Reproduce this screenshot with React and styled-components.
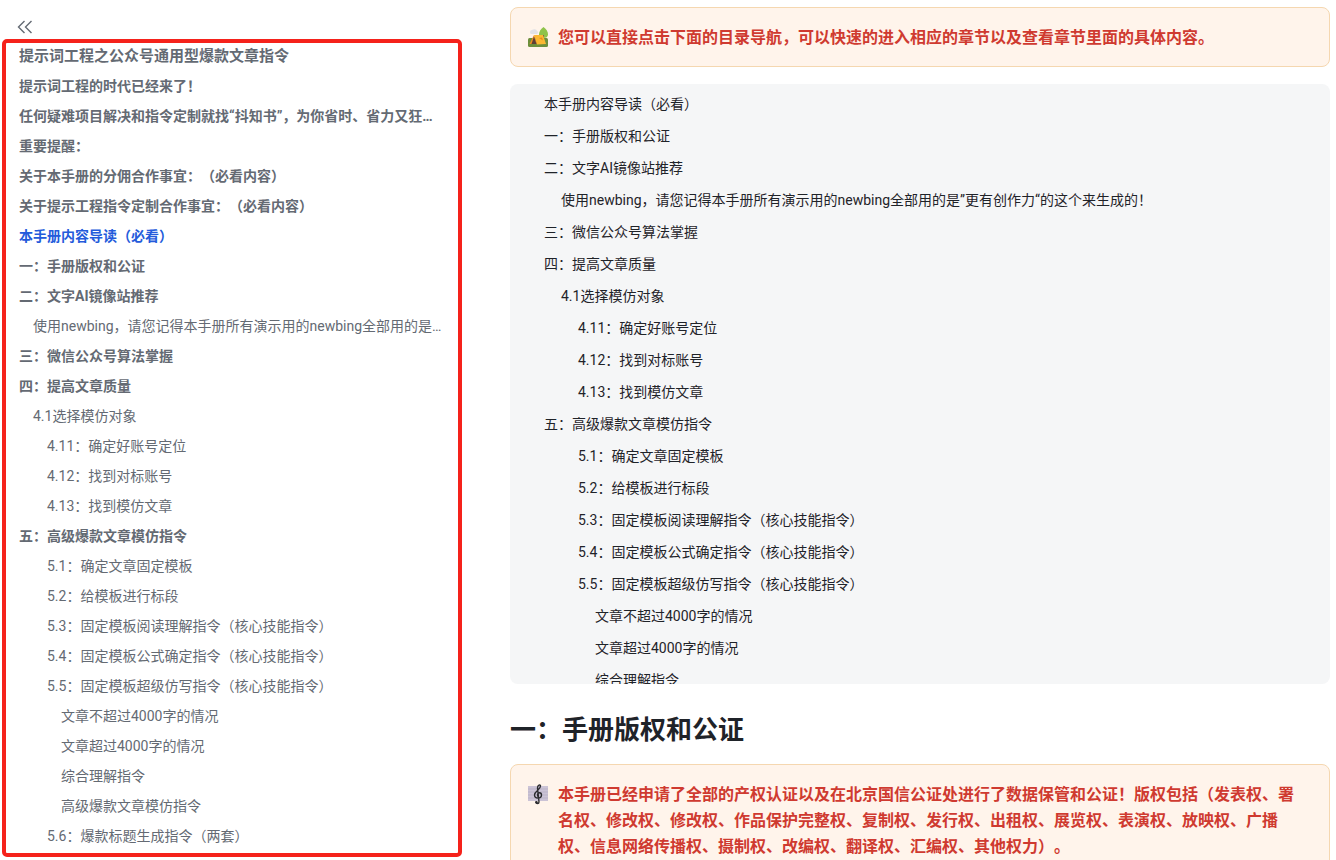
import React from 'react';
import styled, { createGlobalStyle } from 'styled-components';

const GlobalStyle = createGlobalStyle`
  * {
    box-sizing: border-box;
  }

  body {
    margin: 0;
    background-color: #ffffff;
    color: #1f2329;
    font-family: Roboto, 'Noto Sans CJK SC', sans-serif;
    font-size: 14px;
    text-spacing-trim: space-all;
  }
`;

const Page = styled.div`
  display: grid;
  grid-template-columns: 462px minmax(0, 1fr);
  column-gap: 48px;
  height: 100vh;
  padding-right: 6px;
  overflow: hidden;
`;

const Sidebar = styled.aside`
  padding: 15px 0 0 2px;
`;

const CollapseButton = styled.button`
  display: flex;
  align-items: center;
  height: 24px;
  padding: 0 15px;
  border: none;
  background: none;
  color: #646a73;
  cursor: pointer;
`;

const Outline = styled.nav`
  padding: 0 12px 0 13px;
  border: 4px solid #f5221b;
  border-radius: 5px;
`;

const OutlineLink = styled.a`
  display: block;
  height: 30px;
  line-height: 26px;
  padding-left: ${({ $level }) => $level * 14}px;
  overflow: hidden;
  text-overflow: ellipsis;
  white-space: nowrap;
  text-decoration: none;
  font-size: ${({ $title }) => ($title ? 15 : 14)}px;
  font-weight: ${({ $level }) => ($level === 0 ? 700 : 400)};
  color: ${({ $active }) => ($active ? '#245bdb' : '#646a73')};
`;

const Content = styled.main`
  padding-top: 7px;
`;

const Callout = styled.section`
  display: flex;
  gap: 9px;
  padding: 17px 20px 15px 16px;
  border: 1px solid #f5d7b0;
  border-radius: 8px;
  background-color: #fff4eb;
`;

const CalloutIcon = styled.svg`
  flex: none;
  width: 22px;
  height: 22px;
  margin-top: 1px;
`;

const CalloutText = styled.p`
  margin: 0;
  line-height: 26px;
  font-size: 16px;
  font-weight: 700;
  color: #cf3a30;
`;

const Directory = styled.nav`
  max-height: 600px;
  margin-top: 17px;
  padding: 4px 34px;
  overflow-y: auto;
  scrollbar-width: none;
  border-radius: 8px;
  background-color: #f5f6f7;
`;

const DirectoryLink = styled.a`
  display: block;
  padding-left: ${({ $level }) => $level * 17}px;
  line-height: 32px;
  color: #1f2329;
  text-decoration: none;
`;

const Heading = styled.h1`
  margin: 28px 0 16px;
  line-height: 36px;
  font-size: 26px;
  font-weight: 700;
`;

const chapters = [
  { text: '本手册内容导读（必看）', level: 0, active: true },
  { text: '一：手册版权和公证', level: 0 },
  { text: '二：文字AI镜像站推荐', level: 0 },
  { text: '使用newbing，请您记得本手册所有演示用的newbing全部用的是”更有创作力“的这个来生成的！', level: 1 },
  { text: '三：微信公众号算法掌握', level: 0 },
  { text: '四：提高文章质量', level: 0 },
  { text: '4.1选择模仿对象', level: 1 },
  { text: '4.11：确定好账号定位', level: 2 },
  { text: '4.12：找到对标账号', level: 2 },
  { text: '4.13：找到模仿文章', level: 2 },
  { text: '五：高级爆款文章模仿指令', level: 0 },
  { text: '5.1：确定文章固定模板', level: 2 },
  { text: '5.2：给模板进行标段', level: 2 },
  { text: '5.3：固定模板阅读理解指令（核心技能指令）', level: 2 },
  { text: '5.4：固定模板公式确定指令（核心技能指令）', level: 2 },
  { text: '5.5：固定模板超级仿写指令（核心技能指令）', level: 2 },
  { text: '文章不超过4000字的情况', level: 3 },
  { text: '文章超过4000字的情况', level: 3 },
  { text: '综合理解指令', level: 3 },
];

const outline = [
  { text: '提示词工程之公众号通用型爆款文章指令', level: 0, title: true },
  { text: '提示词工程的时代已经来了！', level: 0 },
  { text: '任何疑难项目解决和指令定制就找“抖知书”，为你省时、省力又狂赚钱！', level: 0 },
  { text: '重要提醒：', level: 0 },
  { text: '关于本手册的分佣合作事宜：（必看内容）', level: 0 },
  { text: '关于提示工程指令定制合作事宜：（必看内容）', level: 0 },
  ...chapters,
  { text: '高级爆款文章模仿指令', level: 3 },
  { text: '5.6：爆款标题生成指令（两套）', level: 2 },
];

const CampingIcon = () => (
  <CalloutIcon viewBox="0 0 22 22" aria-hidden="true">
    <rect x="1" y="12" width="20" height="9" rx="1.500" fill="#6d8f3c" />
    <path d="M3 6a2 2 0 0 1 2-2 3 2.500 0 0 1 5 1 1.500 1.500 0 0 1-1 3H4a2 2 0 0 1-1-2z" fill="#e2e2e5" />
    <path d="M16.500 1c-3 2-4.500 5-4.500 7.500 0 2.500 2 3.500 4.500 3.500s4.500-1 4.500-3.500c0-2.500-1.500-5.500-4.500-7.500z" fill="#8fc34a" />
    <path d="M16 9h1v5h-1z" fill="#795046" />
    <path d="M7 9h9l3 9-9 .5z" fill="#fbb832" />
    <path d="M7 9L2.500 18H10z" fill="#ef8d22" />
    <path d="M7 10.500L4.500 18h5z" fill="#5d4037" />
    <path d="M12 12l3-.5 1 3z" fill="#e58a20" />
  </CalloutIcon>
);

const ScoreIcon = () => (
  <CalloutIcon viewBox="0 0 22 22" aria-hidden="true">
    <rect x="1" y="3" width="20" height="15" fill="#cbc3d6" />
    <path d="M1 6h20M1 9h20M1 12h20M1 15h20" stroke="#b5adc2" strokeWidth="0.7" />
    <path
      d="M9 19c0 2 3 2 3 0L10.500 5c0-3 3-4 3-2 0 4-6 5-6 9 0 4 7 4 7 0 0-3-4-3-4 0 0 1 .5 1.500 1 1.500"
      fill="none"
      stroke="#2b2b2f"
      strokeWidth="1.400"
      strokeLinecap="round"
    />
    <circle cx="9.500" cy="19.300" r="1.200" fill="#2b2b2f" />
  </CalloutIcon>
);

const App = () => {
  return (
    <>
      <GlobalStyle />
      <Page lang="zh-CN">
        <Sidebar>
          <CollapseButton type="button" aria-label="收起目录">
            <svg width="16" height="14" viewBox="0 0 16 14" fill="none" stroke="currentColor" strokeWidth="1.4">
              <path d="M7.500 1L1.500 7l6 6M14.500 1l-6 6 6 6" />
            </svg>
          </CollapseButton>
          <Outline>
            {outline.map((item) => (
              <OutlineLink
                key={item.text}
                href="#"
                $level={item.level}
                $title={item.title}
                $active={item.active}
              >
                {item.text}
              </OutlineLink>
            ))}
          </Outline>
        </Sidebar>

        <Content>
          <Callout>
            <CampingIcon />
            <CalloutText>
              您可以直接点击下面的目录导航，可以快速的进入相应的章节以及查看章节里面的具体内容。
            </CalloutText>
          </Callout>

          <Directory>
            {chapters.map((item) => (
              <DirectoryLink key={item.text} href="#" $level={item.level}>
                {item.text}
              </DirectoryLink>
            ))}
          </Directory>

          <Heading>一：手册版权和公证</Heading>

          <Callout>
            <ScoreIcon />
            <CalloutText>
              本手册已经申请了全部的产权认证以及在北京国信公证处进行了数据保管和公证！版权包括（发表权、署名权、修改权、修改权、作品保护完整权、复制权、发行权、出租权、展览权、表演权、放映权、广播权、信息网络传播权、摄制权、改编权、翻译权、汇编权、其他权力）。
            </CalloutText>
          </Callout>
        </Content>
      </Page>
    </>
  );
};

export default App;
